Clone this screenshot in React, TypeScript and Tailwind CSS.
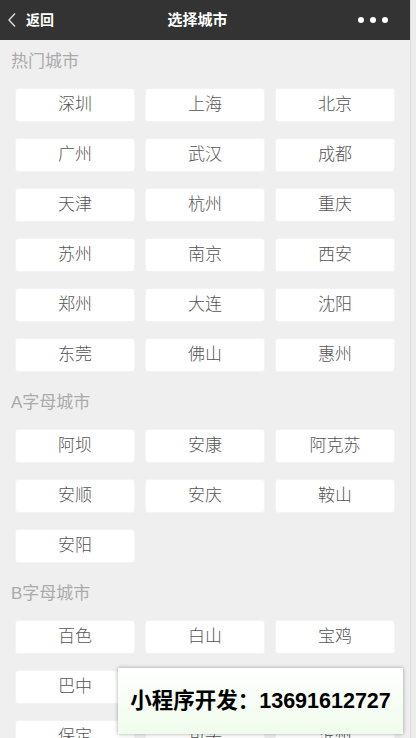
import React from "react";

const sections: { title: string; cities: string[] }[] = [
  {
    title: "热门城市",
    cities: ["深圳", "上海", "北京", "广州", "武汉", "成都", "天津", "杭州", "重庆", "苏州", "南京", "西安", "郑州", "大连", "沈阳", "东莞", "佛山", "惠州"],
  },
  {
    title: "A字母城市",
    cities: ["阿坝", "安康", "阿克苏", "安顺", "安庆", "鞍山", "安阳"],
  },
  {
    title: "B字母城市",
    cities: ["百色", "白山", "宝鸡", "巴中", "北海", "蚌埠", "保定", "包头", "滨州"],
  },
];

const font = { fontFamily: '"Liberation Sans", "Noto Sans CJK SC", sans-serif' };

export default function App() {
  return (
    <div className="relative flex h-[738px] w-[416px] overflow-hidden bg-[#efefef]" style={font}>
      <div className="flex w-[410px] flex-col">
        <div className="flex h-[40px] shrink-0 items-center justify-between bg-[#333333] pl-[7px] pr-[22px] text-white">
          <div className="flex w-[90px] items-center gap-[9px]">
            <svg width="10" height="16" viewBox="0 0 10 16" fill="none">
              <path d="M8 1.5L2 8l6 6.5" stroke="#ddd" strokeWidth="1.4" />
            </svg>
            <span className="text-[14px] font-bold">返回</span>
          </div>
          <span className="text-[15px] font-bold">选择城市</span>
          <div className="flex w-[90px] justify-end gap-[6px]">
            <span className="h-[6px] w-[6px] rounded-full bg-white" />
            <span className="h-[6px] w-[6px] rounded-full bg-white" />
            <span className="h-[6px] w-[6px] rounded-full bg-white" />
          </div>
        </div>

        {sections.map((s, i) => (
          <div key={s.title} className={i === 0 ? "" : "mt-[9px]"}>
            <div className="flex h-[40px] items-center px-[11px] pt-[3px] text-[17px] text-[#aaaaaa]">{s.title}</div>
            <div className="grid grid-cols-3 gap-x-[10px] gap-y-[16px] px-[15px] pt-[8px]">
              {s.cities.map((c) => (
                <div
                  key={c}
                  className="flex h-[34px] items-center justify-center rounded-[3px] border border-[#f3f3f3] bg-white text-[17px] font-light text-[#555555]"
                >
                  {c}
                </div>
              ))}
            </div>
          </div>
        ))}
      </div>
      <div className="w-[6px] shrink-0 border-l border-[#dcdcdc] bg-[#ececec]" />

      <div className="absolute left-[118px] top-[668px] flex h-[66px] w-[285px] items-center justify-center bg-gradient-to-b from-white to-[#effceb] shadow-[0_0_4px_rgba(0,0,0,0.35)]">
        <span className="text-[21.5px] font-bold text-black">小程序开发：13691612727</span>
      </div>
    </div>
  );
}
